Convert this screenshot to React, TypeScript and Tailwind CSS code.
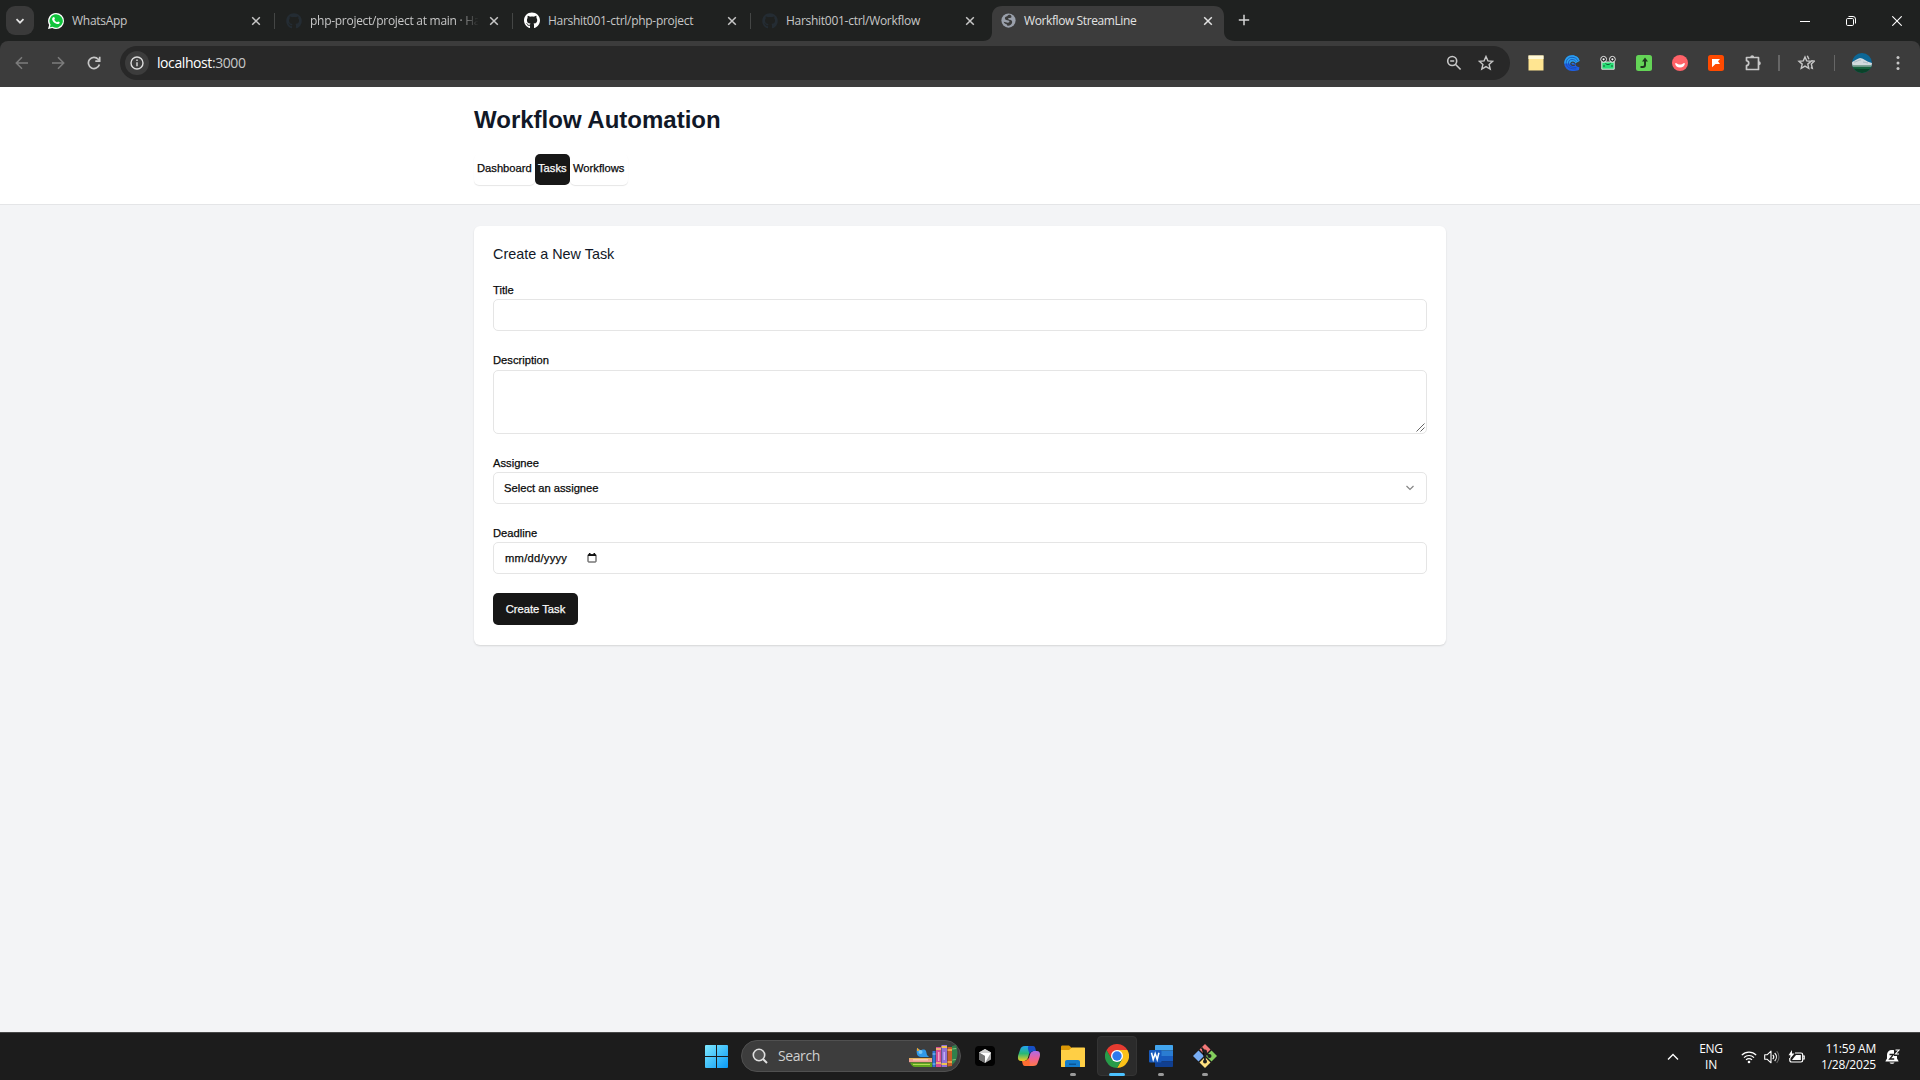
import React from "react";
import { FaGithub } from "react-icons/fa";

function Close({ className = "" }: { className?: string }) {
  return (
    <svg viewBox="0 0 10 10" className={`h-[10px] w-[10px] shrink-0 ${className}`} fill="none" stroke="currentColor" strokeWidth="1.5">
      <path d="M1.2 1.2 8.8 8.8M8.8 1.2 1.2 8.8" />
    </svg>
  );
}

function WhatsApp() {
  return (
    <svg viewBox="0 0 16 16" className="h-4 w-4">
      <path d="M8 0a8 8 0 0 1 0 16 8 8 0 0 1-3.8-1L0 16l1.100-4A8 8 0 0 1 8 0Z" fill="#fff" />
      <path d="M8 1.300a6.700 6.700 0 1 1-3.400 12.400L1.900 14.300l.7-2.600A6.700 6.700 0 0 1 8 1.300Z" fill="#10c43c" />
      <path d="M5.300 4.200c.5-.4.9-.3 1.100.2l.5 1.200c.1.500-.6.800-.6 1.200.5 1.100 1.400 1.900 2.600 2.400.4 0 .7-.9 1.200-.8l1.300.7c.5.300.2 1-.1 1.400-.9.800-2 .8-3.400.1-1.700-.8-2.900-2-3.600-3.700-.4-1-.1-2 1-2.700Z" fill="#fff" />
    </svg>
  );
}

function Globe() {
  return (
    <svg viewBox="0 0 16 16" className="h-[15px] w-[15px]">
      <circle cx="8" cy="8" r="7.600" fill="#9aa0ab" />
      <path d="M9.500 1.800C7 1.500 7.500 3.200 5.600 3.800 4 4.300 3.800 5.800 4.600 6.800c1.100 1.100 3.300.6 4.200 1.700.7 1-.3 1.700-1.400 1.900-1.500.1-3-.9-4.600-1 .5 1.700 1.800 2.400 3.500 2.800 0 .9.500 1.400 1.500 1.400 1.800-.2 3.800-1.600 4.100-3.600.2-1.700-1-2.400-2.400-2.700-1.300-.2-2-.9-1.800-1.800.9-.5 2.400.3 3.200-.6.700-1 .1-2.600-1.400-3.100Z" fill="#3c3c3c" />
    </svg>
  );
}

type TabProps = { icon: React.ReactNode; title: string; active?: boolean; fade?: boolean; last?: boolean };

function Tab({ icon, title, active, fade, last }: TabProps) {
  return (
    <div className={`relative flex h-[41px] w-[238px] shrink-0 items-center pl-[10px] ${active ? "text-[#e3e3e3]" : "text-[#c7c7c7]"}`}>
      {active && (
        <svg viewBox="0 0 252 35" className="absolute bottom-0 left-[-7px] h-[35px] w-[252px]" fill="#3c3c3c">
          <path d="M0 35c6 0 9-4 9-9V10C9 4 13 0 19 0h212c6 0 10 4 10 10v16c0 5 4 9 11 9Z" />
        </svg>
      )}
      <div className="relative flex h-4 w-4 shrink-0 items-center justify-center">{icon}</div>
      <div className={`relative ml-2 w-[168px] whitespace-nowrap text-[12px] leading-4 ${active ? "tracking-[-0.4px]" : "tracking-[-0.28px]"} ${fade ? "[mask-image:linear-gradient(to_right,#000_146px,transparent_169px)]" : ""}`}>{title}</div>
      <Close className="relative ml-[11px]" />
      {!active && !last && <div className="ml-auto mr-px h-[16px] w-[1.500px] bg-[#444645]" />}
    </div>
  );
}

function TabStrip() {
  return (
    <div className="flex h-[41px] bg-[#1f2120]">
      <div className="ml-[6px] mr-1 mt-[6px] flex h-[29px] w-[28px] items-center justify-center rounded-[9px] bg-[#3a3a3a]">
        <svg viewBox="0 0 10 10" className="h-[10px] w-[10px]" fill="none" stroke="#e3e3e3" strokeWidth="1.700"><path d="m1.500 3.200 3.500 3.500 3.500-3.500" /></svg>
      </div>
      <Tab icon={<WhatsApp />} title="WhatsApp" />
      <Tab icon={<FaGithub className="h-4 w-4 text-[#242c33]" />} title="php-project/project at main · Ha" fade />
      <Tab icon={<FaGithub className="h-[17px] w-[17px] text-white" />} title="Harshit001-ctrl/php-project" />
      <Tab icon={<FaGithub className="h-4 w-4 text-[#242c33]" />} title="Harshit001-ctrl/Workflow" last />
      <Tab icon={<Globe />} title="Workflow StreamLine" active />
      <svg viewBox="0 0 12 12" className="ml-[10px] mt-[14px] h-3 w-3" stroke="#d5d5d5" strokeWidth="1.500"><path d="M6 .8v10.400M.8 6h10.400" /></svg>
      <div className="ml-auto flex h-[41px] items-center text-white">
        <svg viewBox="0 0 10 10" className="mr-[36px] h-[10px] w-[10px]" stroke="currentColor"><path d="M0 5.500h10" /></svg>
        <svg viewBox="0 0 10 10" className="mr-[36px] h-[10px] w-[10px]" fill="none" stroke="currentColor"><rect x=".5" y="2.500" width="7" height="7" rx="1.200" /><path d="M2.500.5H7A2.500 2.500 0 0 1 9.500 3v4.500" /></svg>
        <svg viewBox="0 0 10 10" className="mr-[18px] h-[10px] w-[10px]" fill="none" stroke="currentColor" strokeWidth="1.100"><path d="m.3.300 9.400 9.400M9.700.300.3 9.700" /></svg>
      </div>
    </div>
  );
}

function Extensions() {
  return (
    <div className="ml-[18px] flex items-center">
      <svg viewBox="0 0 16 16" className="h-4 w-4"><path d="M.5.500h15v15H.5Z" fill="#ffe591" /><path d="M.5.500h15V4H.5Z" fill="#fff8d7" /></svg>
      <svg viewBox="0 0 16 16" className="ml-5 h-4 w-4" fill="none">
        <path d="M8 .3c4 0 6.800 2.200 7.600 5.700h-3l-1 2.200c-.4 2.300 1 3.600 3.800 4l-.4 2.800C13 15.800 11 16 8 16A7.800 7.800 0 0 1 8 .3Z" fill="#1f5fe0" />
        <path d="M8 .3c4 0 6.800 2.200 7.600 5.700L12 8 7.500 8.500.3 8.500C.3 3.700 3.500.300 8 .3Z" fill="#2aa3ee" />
        <path d="M2.300 9C1.800 5 4.300 2.300 8 2.300c3 0 5 1.300 6 3.700M4.500 9C4.200 6 5.700 4.500 8 4.500c2 0 3.300.8 4 2.200M2.300 9c.7 3.500 4 5 10 5M4.500 9c.6 2.500 3.500 3.600 8 3.600" stroke="#1848b8" strokeWidth=".8" />
        <path d="M10.800 8.500C10.300 6.800 7.200 6.500 6.800 8.600c.1 1.700 2.400 2.300 4 1.400" stroke="#3c3c3c" strokeWidth="1.200" />
      </svg>
      <svg viewBox="0 0 16 16" className="ml-5 h-4 w-4">
        <path d="M1.800 7h12.400v7.200H1.800Z" fill="#27de74" stroke="#e2e9e4" />
        <circle cx="3.600" cy="4.300" r="2.900" fill="#222" stroke="#eee" /><circle cx="12.400" cy="4.300" r="2.900" fill="#222" stroke="#eee" />
        <circle cx="3.600" cy="4.300" r="1.100" fill="#fff" /><circle cx="12.400" cy="4.300" r="1.100" fill="#fff" />
        <path d="M5.500 8.500c1.500 1.500 3.500 1.500 5 0M3 11h2m6 0h2" stroke="#145c36" fill="none" />
      </svg>
      <svg viewBox="0 0 16 16" className="ml-5 h-4 w-4"><rect width="16" height="16" rx="2.500" fill="#64d457" /><path d="M4.500 12h2.300c1.300 0 2.200-.7 2.200-2V5" fill="none" stroke="#20351f" strokeWidth="2" /><path d="M9 2.500 12 6.500H6Z" fill="#20351f" /></svg>
      <svg viewBox="0 0 16 16" className="ml-5 h-4 w-4"><circle cx="8" cy="8" r="8" fill="#ff6268" /><path d="M3 8.200h1.600c1.600 1.900 5.200 1.900 6.800 0H13c-.3 2.700-2.300 4.300-5 4.300s-4.700-1.600-5-4.300Z" fill="#fff" /></svg>
      <svg viewBox="0 0 16 16" className="ml-5 h-4 w-4"><rect width="16" height="16" rx="2.500" fill="#ff4a00" /><path d="M4 4h8l-2 2.300L12 9H7.500L4 12.200Z" fill="#fff" /></svg>
      <svg viewBox="0 0 16 16" className="ml-[21px] h-4 w-4" fill="none" stroke="#c7c7c7" strokeWidth="1.700">
        <path d="M1.500 2.500h12v12h-12v-3.800c3-.6 3-4.400 0-5Z" strokeLinejoin="round" /><path d="M5.200 2.200a2 2 0 0 1 4 0ZM13.800 6.300a2 2 0 0 1 0 4Z" fill="#c7c7c7" stroke="none" />
      </svg>
      <div className="ml-[17px] h-4 w-[1.500px] bg-[#666]" />
      <svg viewBox="0 0 18 16" className="ml-[17px] h-4 w-[18px]" fill="none" stroke="#c7c7c7" strokeWidth="1.400">
        <path d="m8 2 1.700 3.900 4.300.4-3.200 2.800 1 4.200L8 11.100l-3.800 2.200 1-4.200L2 6.300l4.300-.4Z" /><path d="m10.300.8 1.600 3.500m2.300 1.500 3.100.4-3 2.700 1 4.300-1.500-.7" />
      </svg>
      <div className="ml-[19px] h-4 w-[1.500px] bg-[#666]" />
      <svg viewBox="0 0 20 20" className="ml-[17px] h-5 w-5">
        <clipPath id="avatar"><circle cx="10" cy="10" r="10" /></clipPath>
        <g clipPath="url(#avatar)"><path d="M0 0h20v20H0Z" fill="#0d6796" /><path d="M0 9c3-1 4-3 8-4 3 0 5 3 12 5v3H0Z" fill="#d3dade" /><path d="M2 9c3 0 4-2 7-2m2 2c2 0 3 1 5 1" stroke="#9fb0ba" strokeWidth=".7" fill="none" /><path d="M0 12.500h20V20H0Z" fill="#17623d" /><path d="M0 12.500h20v1.200H0Z" fill="#8ba7a0" /><path d="M0 16c6-1 12 1 20-.500V20H0Z" fill="#0a4229" /></g>
      </svg>
      <svg viewBox="0 0 4 16" className="ml-6 mr-5 h-4 w-1" fill="#c7c7c7"><circle cx="2" cy="2.500" r="1.500" /><circle cx="2" cy="8" r="1.500" /><circle cx="2" cy="13.500" r="1.500" /></svg>
    </div>
  );
}

function Toolbar() {
  return (
    <div className="bg-[#1f2120]">
      <div className="flex h-[46px] items-center rounded-t-[8px] bg-[#3c3c3c] pb-[2px]">
        <svg viewBox="0 0 14 14" className="ml-[15px] h-[14px] w-[14px]" fill="none" stroke="#7c7c7c" strokeWidth="1.500"><path d="M13 7H1.500M7 1.200 1.300 7 7 12.800" /></svg>
        <svg viewBox="0 0 14 14" className="ml-[22px] h-[14px] w-[14px]" fill="none" stroke="#7c7c7c" strokeWidth="1.500"><path d="M1 7h11.500M7 1.200 12.700 7 7 12.800" /></svg>
        <svg viewBox="0 0 14 14" className="ml-[22px] h-[14px] w-[14px]" fill="none" stroke="#c7c7c7" strokeWidth="1.700"><path d="M12.400 8.500A5.600 5.600 0 1 1 11.200 3.200L12.500 4.500" /><path d="M12.700.7v4.500H8.300" /></svg>
        <div className="ml-[19px] flex h-[34px] w-[1390px] items-center rounded-full bg-[#282828]">
          <div className="ml-[5px] flex h-6 w-6 items-center justify-center rounded-full bg-[#3c3c3c]">
            <svg viewBox="0 0 14 14" className="h-[14px] w-[14px]" fill="none" stroke="#dcdcdc" strokeWidth="1.400"><circle cx="7" cy="7" r="6" /><path d="M7 6.200V10.300M7 3.600v1.500" /></svg>
          </div>
          <div className="ml-2 text-[14px] leading-5 tracking-[-0.42px] text-[#c7c7c7]"><span className="text-white">localhost</span>:3000</div>
          <svg viewBox="0 0 16 16" className="ml-auto h-4 w-4" fill="none" stroke="#c7c7c7" strokeWidth="1.600"><circle cx="6.200" cy="6" r="4.500" /><path d="m9.600 9.500 5 5M4.200 6h4" /></svg>
          <svg viewBox="0 0 16 16" className="ml-4 mr-4 h-4 w-4" fill="none" stroke="#c7c7c7" strokeWidth="1.400"><path d="m8 1.500 1.900 4.400 4.800.4-3.600 3.100 1.100 4.700L8 11.600l-4.200 2.500 1.100-4.700-3.600-3.100 4.800-.4Z" /></svg>
        </div>
        <Extensions />
      </div>
    </div>
  );
}

function Field({ label, children, className = "" }: { label: string; children: React.ReactNode; className?: string }) {
  return (
    <div className={`flex flex-col ${className}`}>
      <div className="h-[14px] text-[11.2px] leading-[14px] text-[#0a0a0a] [-webkit-text-stroke:0.25px]">{label}</div>
      {children}
    </div>
  );
}

function Page() {
  return (
    <main className="h-[945px] bg-[#f3f4f6] font-['Liberation_Sans',Arial,sans-serif]">
      <header className="h-[118px] border-b border-[#e4e5e7] bg-white">
        <div className="mx-auto w-[972px] pt-[18px]">
          <h1 className="text-[24px] font-bold leading-[29px] text-[#111827]">Workflow Automation</h1>
          <nav className="mt-[20px] flex h-[31px] text-[11.2px] leading-[28px] text-[#0a0a0a] [-webkit-text-stroke:0.25px]">
            <div className="w-[61px] rounded-[5px] pl-[3px] shadow-[0_1px_1px_rgba(0,0,0,0.1)]">Dashboard</div>
            <div className="w-[35px] rounded-[5px] bg-[#171717] pl-[3px] text-[#fafafa]">Tasks</div>
            <div className="w-[58px] rounded-[5px] pl-[3px] shadow-[0_1px_1px_rgba(0,0,0,0.1)]">Workflows</div>
          </nav>
        </div>
      </header>
      <section className="mx-auto mt-[21px] h-[419px] w-[972px] rounded-[6px] bg-white px-[19px] pt-[20px] shadow-[0_1px_2px_rgba(0,0,0,0.13)]">
        <h2 className="text-[14.4px] leading-4 text-[#111827]">Create a New Task</h2>
        <Field label="Title" className="mt-[21px] gap-[2px]">
          <div className="h-[32px] rounded-[5px] border border-[#e5e5e5]" />
        </Field>
        <Field label="Description" className="mt-[22px] gap-[3px]">
          <div className="flex h-[64px] items-end justify-end rounded-[5px] border border-[#e5e5e5]">
            <svg viewBox="0 0 10 10" className="h-[10px] w-[10px]" stroke="#555" strokeWidth=".9"><path d="m.5 8.500 8-8M4.500 8.500l4-4" /></svg>
          </div>
        </Field>
        <Field label="Assignee" className="mt-[22px] gap-[2px]">
          <div className="flex h-[32px] items-center justify-between rounded-[5px] border border-[#e5e5e5] pl-[10px] pr-[11px] text-[11.2px] text-[#0a0a0a] [-webkit-text-stroke:0.25px]">
            Select an assignee
            <svg viewBox="0 0 10 10" className="h-[10px] w-[10px]" fill="none" stroke="#858585" strokeWidth="1.200"><path d="M1.500 3 5 6.500 8.500 3" /></svg>
          </div>
        </Field>
        <Field label="Deadline" className="mt-[22px] gap-[2px]">
          <div className="flex h-[32px] items-center rounded-[5px] border border-[#e5e5e5] pl-[11px] text-[11.2px] text-[#0a0a0a] [-webkit-text-stroke:0.25px]">
            <span className="w-[82px] tracking-[0.25px]">mm/dd/yyyy</span>
            <svg viewBox="0 0 10 10" className="h-[10px] w-[10px]" fill="none" stroke="#333"><rect x="1" y="1.500" width="8" height="7.500" rx=".5" /><path d="M1 2.200h8M2.700 0v2M7.300 0v2" strokeWidth="1.600" stroke="#111" /></svg>
          </div>
        </Field>
        <div className="mt-[19px] flex h-[32px] w-[85px] items-center justify-center rounded-[5px] bg-[#171717] text-[11.2px] text-[#fafafa] [-webkit-text-stroke:0.25px]">Create Task</div>
      </section>
    </main>
  );
}

function Books() {
  return (
    <svg viewBox="0 0 50 24" className="ml-auto mr-[2px] h-6 w-[50px]">
      <path d="M1 14h23v4H1Z" fill="#e9b45c" /><path d="M1 15.200h23v3H1Z" fill="#f0a094" /><path d="M5 15h15v1.500H5Z" fill="#f7cbb4" />
      <path d="M2 18.500h22V23H7c-2 0-4-2-5-4.500Z" fill="#5fa520" /><path d="M5 20h17v1H5Z" fill="#b6d957" />
      <path d="m9 4 4 2.500c1-1.300 4-1.500 5 .5l1 4 2 2h-8c-4 0-5-4-4-9Z" fill="#3199e8" /><path d="m9 3.700 3.200 2.800-3.200.5Z" fill="#f2a42a" /><circle cx="12.500" cy="8" r="2" fill="#76c7f7" />
      <path d="M24.500 7h3v16h-3Z" fill="#3274d5" /><path d="M24.500 10h3M24.500 20h3" stroke="#84cbf4" />
      <path d="M28 3h5v20h-5Z" fill="#d54c93" /><path d="M28 5h5M28 19h5" stroke="#f9c969" strokeWidth="1.500" /><path d="M30 8h1.500v9H30Z" fill="#f4a1cc" />
      <path d="M33.500 1h5.500v22h-5.500Z" fill="#9272d6" /><path d="M33.500 3H39M33.500 20H39" stroke="#f0c251" strokeWidth="2" /><path d="M35.500 8H37v8h-1.500Z" fill="#c4aef4" />
      <path d="M39.500 3h4.500v19l-4.500.5Z" fill="#c75d29" /><path d="M39.500 6H44m-4.500 12H44" stroke="#f4ba56" strokeWidth="1.300" />
      <path d="m44 2 4-1c2 6 2 12-1 17l-3 3Z" fill="#31804b" /><path d="m44.300 5 4-.5M44.300 16l3.500-.5" stroke="#82c47b" />
    </svg>
  );
}

function TaskButton({ children, open, active }: { children: React.ReactNode; open?: boolean; active?: boolean }) {
  return (
    <div className={`relative mr-1 mt-[3px] h-[40px] w-[40px] shrink-0 rounded-[4px] ${active ? "border border-[#343434] bg-[#2b2b2b]" : ""}`}>
      <div className="flex h-full w-full items-center justify-center">{children}</div>
      {open && <div className="absolute bottom-0 left-[17px] h-[3px] w-[6px] rounded-full bg-[#9a9a9a]" />}
      {active && <div className="absolute -bottom-px left-[11px] h-[3px] w-[16px] rounded-full bg-[#4cc2ff]" />}
    </div>
  );
}

function TaskIcons() {
  return (
    <div className="ml-1 flex">
      <TaskButton>
        <svg viewBox="0 0 20 20" className="h-5 w-5"><rect width="20" height="20" rx="4" fill="#020202" /><path d="m10 3 6 3.500v7L10 17l-6-3.500v-7Z" fill="#a7a7a7" /><path d="M4 6.500h12L10 17V10Z" fill="#fff" /><path d="M4 6.500 10 10v7l-6-3.500Z" fill="#737373" /><path d="m10 3 6 3.500H4Z" fill="#d0d0d0" /></svg>
      </TaskButton>
      <TaskButton>
        <svg viewBox="0 0 24 24" className="h-[24px] w-[24px]">
          <defs>
            <linearGradient id="cpA" x1="0" y1="0" x2="0" y2="1"><stop stopColor="#23a4f3" /><stop offset=".5" stopColor="#27b878" /><stop offset="1" stopColor="#f6cc22" /></linearGradient>
            <linearGradient id="cpB" x1="0" y1="0" x2="0" y2="1"><stop stopColor="#ad6be8" /><stop offset=".5" stopColor="#ed6198" /><stop offset="1" stopColor="#ff7846" /></linearGradient>
          </defs>
          <path d="M8 2h8c-2 1-3 4-4 8-1.200 5-2 7-5.500 7H4c-3 0-3.500-3-2.700-6L3 6c1-3 2-4 5-4Z" fill="url(#cpA)" />
          <path d="M16 22H8c2-1 3-4 4-8 1.200-5 2-7 5.500-7H20c3 0 3.500 3 2.700 6L21 18c-1 3-2 4-5 4Z" fill="url(#cpB)" />
          <path d="M12 2h4c2 0 2.300 1.500 3 5h-2c-2 0-3.500 1-4.500 3l-1-3c-.5-2-1-4 0-5Z" fill="#1750c5" />
          <path d="M12 22H8c-2 0-2.300-1.500-3-5h2c2 0 3.500-1 4.500-3l1 3c.5 2 .5 4-.5 5Z" fill="#ff6e32" />
        </svg>
      </TaskButton>
      <TaskButton open>
        <svg viewBox="0 0 24 22" className="h-[22px] w-6"><path d="M0 2C0 1 .5.500 1.500.500H8L11 3h12c.6 0 1 .4 1 1v17c0 .6-.4 1-1 1H1c-.6 0-1-.4-1-1Z" fill="#dc9806" /><path d="M0 5h8l3-2.500h12c.6 0 1 .4 1 1V21c0 .6-.4 1-1 1H1c-.6 0-1-.4-1-1Z" fill="#ffcf45" /><path d="M4 22v-5c0-1.300.7-2 2-2h11c1.300 0 2 .7 2 2v5Z" fill="#147dcc" /><path d="M8 18.500h7V20H8Z" fill="#0b5697" /></svg>
      </TaskButton>
      <TaskButton active>
        <svg viewBox="0 0 24 24" className="h-6 w-6"><path d="M12 12 1.600 6A12 12 0 0 1 22.400 6Z" fill="#e63b30" /><path d="M22.400 6A12 12 0 0 1 12 24l5.200-9L12 6Z" fill="#fbc118" /><path d="M12 24A12 12 0 0 1 1.600 6l5.200 9 5.200 3 5.200-3Z" fill="#279b49" /><path d="M12 6h10.400L17 12Z" fill="#fbc118" /><path d="M1.600 6h20.800H12l-5.500 8.500Z" fill="#e63b30" /><circle cx="12" cy="12" r="6" fill="#fff" /><circle cx="12" cy="12" r="4.700" fill="#2d79ee" /></svg>
      </TaskButton>
      <TaskButton open>
        <svg viewBox="0 0 24 22" className="h-[22px] w-6"><path d="M6 .8c0-.5.300-.8.800-.8H23c.6 0 1 .4 1 1v4.500H6Z" fill="#42a5ee" /><path d="M6 5.500h18V11H6Z" fill="#2a7cd2" /><path d="M6 11h18v5.500H6Z" fill="#185abd" /><path d="M6 16.500h18V21c0 .6-.4 1-1 1H7c-.6 0-1-.4-1-1Z" fill="#103f91" /><rect y="5" width="12.500" height="12.500" rx="1" fill="#185abd" /><path d="m2.500 7.800 1.700 6.700 2-6 2 6 1.700-6.700" fill="none" stroke="#fff" strokeWidth="1.500" /></svg>
      </TaskButton>
      <TaskButton open>
        <svg viewBox="0 0 24 24" className="h-6 w-6"><path d="m12 0 5.500 5.500L12 11 6.500 5.500Z" fill="#f47878" /><path d="m5.500 6.500 5.500 5.500-5.500 5.500L0 12Z" fill="#78adf5" /><path d="m18.500 6.500L24 12l-5.500 5.500L13 12Z" fill="#83cf5d" /><path d="m12 13 5.500 5.500L12 24l-5.500-5.500Z" fill="#ffe180" /><path d="M8.500 3.500 12 7.500v10M12 8l4.500 4" stroke="#202020" strokeWidth="1.700" /><circle cx="12" cy="7.500" r="2" fill="#202020" /><circle cx="16.500" cy="12" r="2" fill="#202020" /><circle cx="12" cy="17.500" r="2" fill="#202020" /></svg>
      </TaskButton>
    </div>
  );
}

function Taskbar() {
  return (
    <footer className="flex h-12 border-t border-[#474747] bg-[#1c1c1c] text-white">
      <svg viewBox="0 0 23 23" className="ml-[705px] mt-[12px] h-[23px] w-[23px]"><defs><linearGradient id="win" x1="0" y1="0" x2="1" y2="1"><stop stopColor="#7ee9ff" /><stop offset="1" stopColor="#0999f5" /></linearGradient></defs><path d="M0 1a1 1 0 0 1 1-1h10v11H0ZM12 0h10a1 1 0 0 1 1 1v10H12ZM0 12h11v11H1a1 1 0 0 1-1-1ZM12 12h11v10a1 1 0 0 1-1 1H12Z" fill="url(#win)" /></svg>
      <div className="ml-[13px] mt-[7px] flex h-[32px] w-[220px] items-center rounded-full border border-[#505050] bg-[#3d3d3d]">
        <svg viewBox="0 0 16 16" className="ml-[10px] h-4 w-4" fill="none" stroke="#e0e0e0" strokeWidth="1.600"><circle cx="7" cy="7" r="5.700" fill="#555" /><path d="m11 11 4 4" strokeWidth="2" /></svg>
        <span className="ml-[10px] text-[14px] leading-5 tracking-[-0.4px] text-[#d0d0d0]">Search</span>
        <Books />
      </div>
      <TaskIcons />
      <div className="ml-auto flex h-[47px] items-center">
        <svg viewBox="0 0 12 12" className="mr-[19px] h-3 w-3" fill="none" stroke="#fff" strokeWidth="1.300"><path d="m1 8.500 5-5 5 5" /></svg>
        <div className="mr-[17px] w-[26px] text-center text-[12px] leading-4 tracking-[-0.3px]">ENG<br />IN</div>
        <svg viewBox="0 0 16 14" className="mr-[7px] h-[14px] w-4" fill="none" stroke="#fff" strokeWidth="1.200"><path d="M.8 5.200a10.200 10.200 0 0 1 14.400 0M3 7.600a7 7 0 0 1 10 0M5 9.900a4.200 4.200 0 0 1 6 0" /><circle cx="8" cy="12" r="1.300" fill="#fff" stroke="none" /></svg>
        <svg viewBox="0 0 16 14" className="mr-[8px] h-[14px] w-4" fill="none" stroke="#fff" strokeWidth="1.100"><path d="M.7 4.700h2.600L7 1.200v11.600L3.300 9.300H.7Z" strokeLinejoin="round" /><path d="M8.800 4.800c1.200 1.300 1.200 3.100 0 4.400M10.700 3c2.200 2.300 2.200 5.700 0 8" /><path d="M12.700 1.200c3 3.300 3 8.300 0 11.600" stroke="#686868" /></svg>
        <svg viewBox="0 0 17 14" className="mr-[14px] h-[14px] w-[17px]" fill="none" stroke="#fff" strokeWidth="1.200"><path d="M7 3h6c1 0 1.700.7 1.700 1.700v5.600c0 1-.7 1.700-1.700 1.700H3.500c-1 0-1.700-.7-1.700-1.700V8" /><path d="M8 5h4.800v5H4l1.500-2Z" fill="#fff" stroke="none" /><path d="M15 6h1.200v3H15" /><path d="M4 0 .5 5.200h2L1.800 9 6.500 3.600H4Z" fill="#fff" stroke="none" /></svg>
        <div className="w-[57px] whitespace-nowrap text-right text-[12px] leading-4 tracking-[-0.2px]">11:59 AM<br />1/28/2025</div>
        <svg viewBox="0 0 16 16" className="ml-[8px] mr-[20px] h-4 w-4"><path d="M8 1C4.800 1 3 3 3 6v3.500L1.500 12v.5h13V12L13 9.500V6c0-3-2-5-5-5ZM5.500 13.500h5c-.4 1.700-4.600 1.700-5 0Z" fill="#fff" /><path d="M10 0h6v7h-6Z" fill="#1c1c1c" /><path d="M11.500 1H15l-3.500 4H15" fill="none" stroke="#fff" strokeWidth="1.100" /><path d="M5.500 5.500h4L5.700 10h4.500" fill="none" stroke="#1c1c1c" strokeWidth="1.300" /></svg>
      </div>
    </footer>
  );
}

export default function App() {
  return (
    <div className="flex h-[1080px] w-[1920px] flex-col overflow-hidden font-['Open_Sans','Noto_Sans',sans-serif]">
      <TabStrip />
      <Toolbar />
      <Page />
      <Taskbar />
    </div>
  );
}
